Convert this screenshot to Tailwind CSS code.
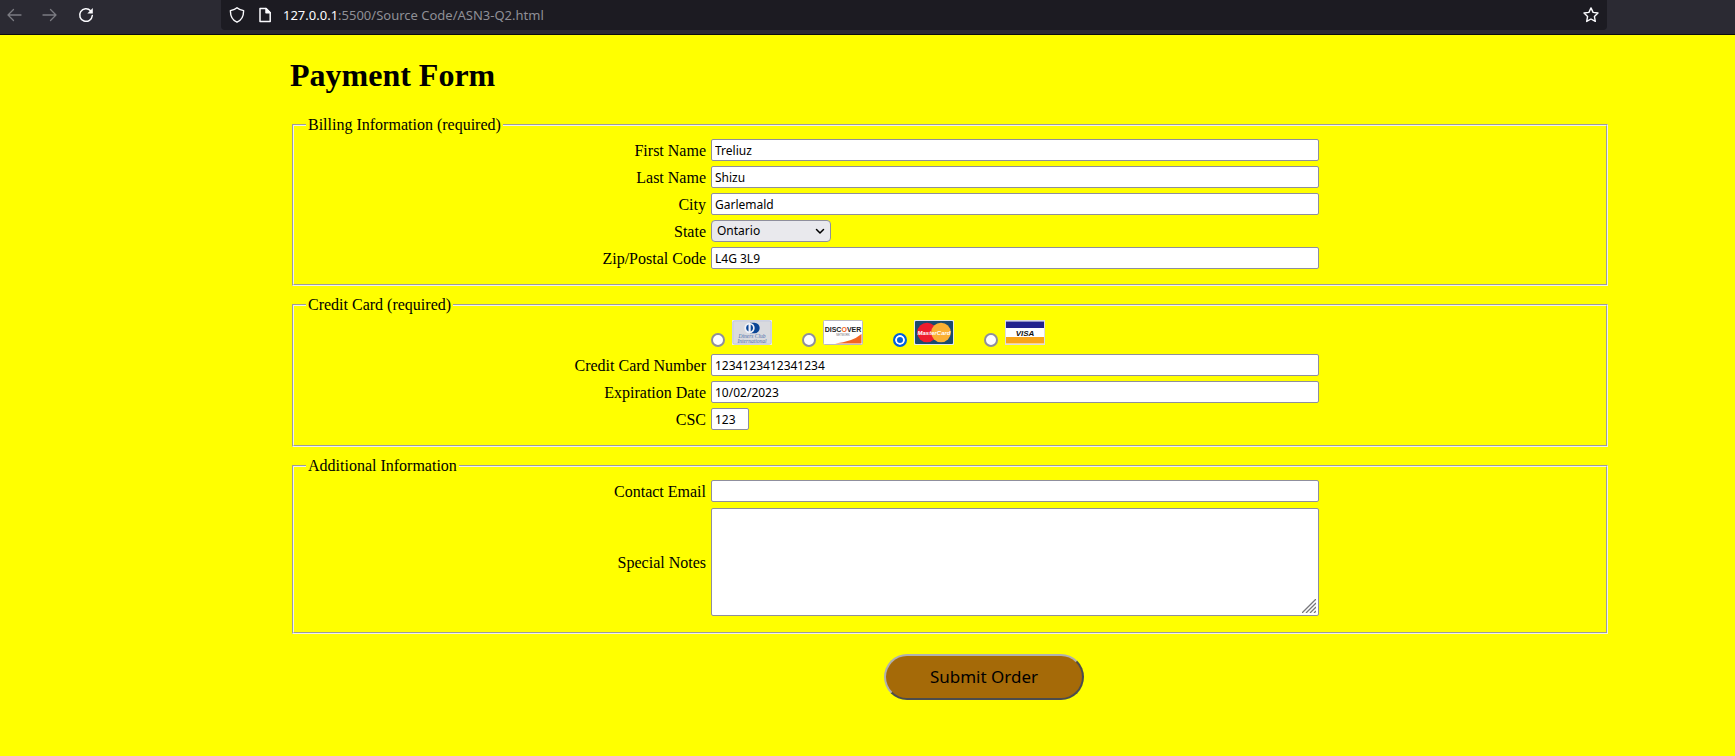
<!DOCTYPE html>
<html lang="en">
<head>
<meta charset="utf-8">
<title>Payment Form</title>
<script src="https://cdn.jsdelivr.net/npm/@tailwindcss/browser@4"></script>
</head>
<body class="min-h-screen bg-[#ffff00] text-black font-['Liberation_Serif',serif] text-base leading-[18px]">
<header class="flex h-[35px] items-start border-b border-[#0c0c0d] bg-[#2b2a33] font-['Noto_Sans',sans-serif]">
  <nav class="flex h-[30px] w-[221px] shrink-0 items-center gap-5 pl-1.5" aria-label="Browser">
    <button type="button" aria-label="Back" class="text-[#7b7b82]"><svg class="size-4" viewBox="0 0 16 16" fill="none" stroke="currentColor" stroke-width="1.3" stroke-linecap="round" stroke-linejoin="round"><path d="M15 8H2M7.500 2.500 2 8l5.500 5.500"/></svg></button>
    <button type="button" aria-label="Forward" class="text-[#7b7b82]"><svg class="size-4" viewBox="0 0 16 16" fill="none" stroke="currentColor" stroke-width="1.3" stroke-linecap="round" stroke-linejoin="round"><path d="M1 8h13M8.500 2.500 14 8l-5.500 5.500"/></svg></button>
    <button type="button" aria-label="Reload" class="text-[#fbfbfe]"><svg class="size-4" viewBox="0 0 16 16" fill="none" stroke="currentColor" stroke-width="1.500" stroke-linecap="round"><path d="M14.300 8.500A6.300 6.300 0 1 1 12.600 3.700"/><path d="M14.800 1v5.500h-5.500z" fill="currentColor" stroke="none"/></svg></button>
  </nav>
  <div class="flex h-[30px] grow items-center rounded-b bg-[#1c1b22] pr-2 pl-2 text-[#fbfbfe]">
    <svg class="size-4" viewBox="0 0 16 16" fill="none" stroke="currentColor" stroke-width="1.400" stroke-linejoin="round"><path d="M8 .8c1.600 1.500 4 2.200 6.600 2.800.1 5-2 9.600-6.600 11.600C3.400 13.200 1.300 8.600 1.400 3.600 4 3 6.400 2.300 8 .8z"/></svg>
    <svg class="ml-3 size-4" viewBox="0 0 16 16" fill="none" stroke="currentColor" stroke-width="1.500" stroke-linejoin="round"><path d="M3 1.500h6l4.200 4.200v8.800H3z"/><path d="M9 1.500v4.200h4.200z" fill="currentColor"/></svg>
    <span class="ml-2.5 grow text-[13px]">127.0.0.1<span class="text-[#8f8f96]">:5500/Source Code/ASN3-Q2.html</span></span>
    <button type="button" aria-label="Bookmark this page"><svg class="size-4" viewBox="0 0 16 16" fill="none" stroke="currentColor" stroke-width="1.400" stroke-linejoin="round"><path d="m8 .9 2.100 4.500 4.900.6-3.600 3.400.9 5L8 12l-4.300 2.400.9-5L1 6l4.900-.6z"/></svg></button>
  </div>
  <div class="w-32 shrink-0"></div>
</header>

<main class="mr-[125px] ml-[290px] pt-[22px]">
  <h1 class="mb-[22px] text-[32px] leading-[37px] font-bold">Payment Form</h1>
  <form class="flex flex-col gap-2.5">
    <fieldset class="mx-0.5 border-2 border-[#f0f0f0] [border-style:groove] px-3 pt-[5px] pb-[15px]">
      <legend class="px-0.5">Billing Information (required)</legend>
      <div class="grid grid-cols-[400fr_608fr_270fr] items-center gap-x-[5px] gap-y-[5px]">
        <label for="first" class="pt-0.5 text-right">First Name</label>
        <input id="first" type="text" value="Treliuz" class="h-[22px] w-full rounded-xs border border-[#8f8f9d] bg-white px-[3px] font-['Noto_Sans',sans-serif] text-xs">
        <label for="last" class="col-start-1 pt-0.5 text-right">Last Name</label>
        <input id="last" type="text" value="Shizu" class="h-[22px] w-full rounded-xs border border-[#8f8f9d] bg-white px-[3px] font-['Noto_Sans',sans-serif] text-xs">
        <label for="city" class="col-start-1 pt-0.5 text-right">City</label>
        <input id="city" type="text" value="Garlemald" class="h-[22px] w-full rounded-xs border border-[#8f8f9d] bg-white px-[3px] font-['Noto_Sans',sans-serif] text-xs">
        <label for="state" class="col-start-1 pt-0.5 text-right">State</label>
        <div class="relative w-[120px]">
          <select id="state" class="block h-[22px] w-full appearance-none rounded border border-[#8f8f9d] bg-[#e9e9ed] px-[5px] font-['Noto_Sans',sans-serif] text-xs"><option>Ontario</option></select>
          <svg class="pointer-events-none absolute top-1.5 right-1.5 size-2.5" viewBox="0 0 10 10" fill="none" stroke="black" stroke-width="1.500" stroke-linecap="round" stroke-linejoin="round"><path d="M1.500 3.500 5 7l3.500-3.500"/></svg>
        </div>
        <label for="zip" class="col-start-1 pt-0.5 text-right">Zip/Postal Code</label>
        <input id="zip" type="text" value="L4G 3L9" class="h-[22px] w-full rounded-xs border border-[#8f8f9d] bg-white px-[3px] font-['Noto_Sans',sans-serif] text-xs">
      </div>
    </fieldset>

    <fieldset class="mx-0.5 border-2 border-[#f0f0f0] [border-style:groove] px-3 pt-[5px] pb-[15px]">
      <legend class="px-0.5">Credit Card (required)</legend>
      <div class="grid grid-cols-[400fr_608fr_270fr] items-center gap-x-[5px] gap-y-[5px]">
        <div class="col-start-2 flex h-[30px] items-start gap-[30px] pt-px">
          <label class="flex items-start gap-[7px]">
            <input type="radio" name="card" aria-label="Diners Club" class="mt-[13px] size-3.5 appearance-none rounded-full border-2 border-[#8f8f9d] bg-white checked:border-[#0060df] checked:bg-[#0060df] checked:shadow-[inset_0_0_0_2px_white]">
            <svg class="h-[25px] w-10" viewBox="0 0 40 25"><rect width="40" height="25" rx="1" fill="#f4f4f8"/><rect x=".8" y=".8" width="38.400" height="23.400" rx="1.500" fill="#d9dade" stroke="#b4bddb" stroke-width=".8"/><path d="M18 2.800h4.500a5.200 5.200 0 0 1 0 10.400H18z" fill="#0a4595"/><circle cx="17.500" cy="8" r="5.200" fill="#f0f2f8"/><path d="M16.500 4.600v6.800a3.600 3.600 0 0 1 0-6.800zm2.200 0v6.800a3.600 3.600 0 0 0 0-6.800z" fill="#0a4595"/><g fill="#4a6cab" font-family="Liberation Serif" font-style="italic" font-size="5.500" text-anchor="middle"><text x="20" y="18">Diners Club</text><text x="20" y="22.500">International</text></g></svg>
          </label>
          <label class="flex items-start gap-[7px]">
            <input type="radio" name="card" aria-label="Discover" class="mt-[13px] size-3.5 appearance-none rounded-full border-2 border-[#8f8f9d] bg-white checked:border-[#0060df] checked:bg-[#0060df] checked:shadow-[inset_0_0_0_2px_white]">
            <svg class="h-[25px] w-10" viewBox="0 0 40 25"><rect x=".5" y=".5" width="39" height="24" rx="1" fill="#fff" stroke="#b9b9c4"/><path d="M12 23.500Q29 22 38.500 14v9.500z" fill="#f26522"/><g font-family="Liberation Sans" text-anchor="middle"><text x="20" y="12" font-size="7" font-weight="bold" fill="#222">DISC<tspan fill="#f26522">O</tspan>VER</text><text x="20" y="15.500" font-size="2.600" fill="#666">NETWORK</text></g></svg>
          </label>
          <label class="flex items-start gap-[7px]">
            <input type="radio" name="card" checked aria-label="MasterCard" class="mt-[13px] size-3.5 appearance-none rounded-full border-2 border-[#8f8f9d] bg-white checked:border-[#0060df] checked:bg-[#0060df] checked:shadow-[inset_0_0_0_2px_white]">
            <svg class="h-[25px] w-10" viewBox="0 0 40 25"><rect width="40" height="25" rx="1" fill="#e4e9ee"/><rect x="1" y="1" width="38" height="23" rx="1" fill="#1b4b6e"/><circle cx="13" cy="12.500" r="9.800" fill="#ee1c2e"/><circle cx="27" cy="12.500" r="9.800" fill="#fbb034"/><text x="20" y="15" font-family="Liberation Sans" font-style="italic" font-weight="bold" font-size="6" text-anchor="middle" fill="#fff">MasterCard</text></svg>
          </label>
          <label class="flex items-start gap-[7px]">
            <input type="radio" name="card" aria-label="Visa" class="mt-[13px] size-3.5 appearance-none rounded-full border-2 border-[#8f8f9d] bg-white checked:border-[#0060df] checked:bg-[#0060df] checked:shadow-[inset_0_0_0_2px_white]">
            <svg class="h-[25px] w-10" viewBox="0 0 40 25"><rect x=".5" y=".5" width="39" height="24" fill="#fff" stroke="#dcdce4"/><path d="M1 1.500h38v6.500H1z" fill="#22228e"/><path d="M1 17h38v6.500H1z" fill="#f9a51a"/><text x="20" y="15.500" font-family="Liberation Sans" font-style="italic" font-weight="bold" font-size="8" text-anchor="middle" fill="#111">VISA</text></svg>
          </label>
        </div>
        <label for="number" class="col-start-1 pt-0.5 text-right">Credit Card Number</label>
        <input id="number" type="text" value="1234123412341234" class="h-[22px] w-full rounded-xs border border-[#8f8f9d] bg-white px-[3px] font-['Noto_Sans',sans-serif] text-xs">
        <label for="expiry" class="col-start-1 pt-0.5 text-right">Expiration Date</label>
        <input id="expiry" type="text" value="10/02/2023" class="h-[22px] w-full rounded-xs border border-[#8f8f9d] bg-white px-[3px] font-['Noto_Sans',sans-serif] text-xs">
        <label for="csc" class="col-start-1 pt-0.5 text-right">CSC</label>
        <input id="csc" type="text" value="123" class="h-[22px] w-[38px] rounded-xs border border-[#8f8f9d] bg-white px-[3px] font-['Noto_Sans',sans-serif] text-xs">
      </div>
    </fieldset>

    <fieldset class="mx-0.5 border-2 border-[#f0f0f0] [border-style:groove] px-3 pt-[5px] pb-4">
      <legend class="px-0.5">Additional Information</legend>
      <div class="grid grid-cols-[400fr_608fr_270fr] items-center gap-x-[5px] gap-y-1.5">
        <label for="email" class="pt-0.5 text-right">Contact Email</label>
        <input id="email" type="email" class="h-[22px] w-full rounded-xs border border-[#8f8f9d] bg-white px-[3px] font-['Noto_Sans',sans-serif] text-xs">
        <label for="notes" class="col-start-1 pt-0.5 text-right">Special Notes</label>
        <div class="relative">
          <textarea id="notes" class="block h-[108px] w-full resize-none rounded-xs border border-[#8f8f9d] bg-white px-[3px] font-['Noto_Sans',sans-serif] text-xs"></textarea>
          <svg class="pointer-events-none absolute right-[3px] bottom-[3px] size-3.5" viewBox="0 0 14 14" stroke="#77777c" stroke-width="1.300"><path d="M0 14 14 0M4 14 14 4M8 14l6-6M12 14l2-2"/></svg>
        </div>
      </div>
    </fieldset>
    <button type="submit" class="mt-2.5 ml-[45%] h-[46px] w-[200px] rounded-full border-2 border-t-[#b0b0b0] border-r-[#4c4c4c] border-b-[#4c4c4c] border-l-[#b0b0b0] bg-[#a56a08] font-['Noto_Sans',sans-serif] text-[17px]">Submit Order</button>
  </form>
</main>
</body>
</html>
